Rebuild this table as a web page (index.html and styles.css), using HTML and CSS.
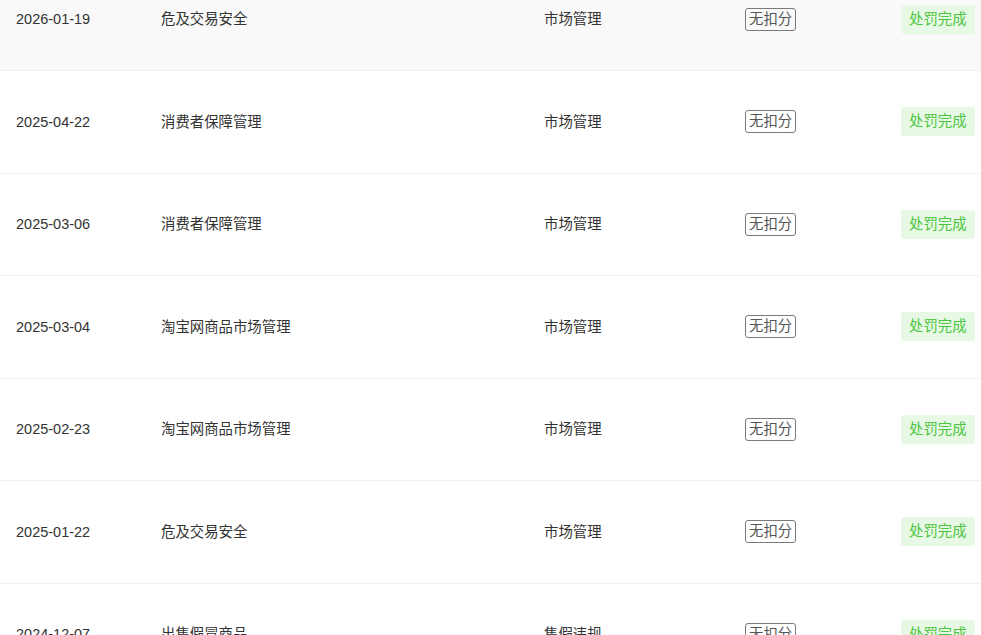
FILE: index.html
```html
<!DOCTYPE html>
<html lang="zh-CN">
<head>
<meta charset="utf-8">
<title>处罚记录</title>
<link rel="stylesheet" href="styles.css">
</head>
<body>
<div class="viewport">
  <div class="table">
    <div class="row row-hover">
      <div class="cell date">2026-01-19</div>
      <div class="cell">危及交易安全</div>
      <div class="cell">市场管理</div>
      <div class="cell"><span class="score">无扣分</span></div>
      <div class="cell"><span class="status">处罚完成</span></div>
    </div>
    <div class="row">
      <div class="cell date">2025-04-22</div>
      <div class="cell">消费者保障管理</div>
      <div class="cell">市场管理</div>
      <div class="cell"><span class="score">无扣分</span></div>
      <div class="cell"><span class="status">处罚完成</span></div>
    </div>
    <div class="row">
      <div class="cell date">2025-03-06</div>
      <div class="cell">消费者保障管理</div>
      <div class="cell">市场管理</div>
      <div class="cell"><span class="score">无扣分</span></div>
      <div class="cell"><span class="status">处罚完成</span></div>
    </div>
    <div class="row">
      <div class="cell date">2025-03-04</div>
      <div class="cell">淘宝网商品市场管理</div>
      <div class="cell">市场管理</div>
      <div class="cell"><span class="score">无扣分</span></div>
      <div class="cell"><span class="status">处罚完成</span></div>
    </div>
    <div class="row">
      <div class="cell date">2025-02-23</div>
      <div class="cell">淘宝网商品市场管理</div>
      <div class="cell">市场管理</div>
      <div class="cell"><span class="score">无扣分</span></div>
      <div class="cell"><span class="status">处罚完成</span></div>
    </div>
    <div class="row">
      <div class="cell date">2025-01-22</div>
      <div class="cell">危及交易安全</div>
      <div class="cell">市场管理</div>
      <div class="cell"><span class="score">无扣分</span></div>
      <div class="cell"><span class="status">处罚完成</span></div>
    </div>
    <div class="row">
      <div class="cell date">2024-12-07</div>
      <div class="cell">出售假冒商品</div>
      <div class="cell">售假违规</div>
      <div class="cell"><span class="score">无扣分</span></div>
      <div class="cell"><span class="status">处罚完成</span></div>
    </div>
  </div>
</div>
</body>
</html>
```
FILE: styles.css
```css
html, body {
  margin: 0;
  padding: 0;
  background: #ffffff;
}
body {
  font-family: "Liberation Sans", "Noto Sans CJK SC", sans-serif;
  font-size: 14px;
  color: #333333;
  overflow: hidden;
  height: 635px;
}
.viewport {
  height: 635px;
  overflow: hidden;
}
.table {
  margin-top: -31.5px;
}
.row {
  display: grid;
  grid-template-columns: 145px 383px 201px 156px 1fr;
  align-items: center;
  height: 102.5px;
  box-sizing: border-box;
  padding-left: 16px;
  padding-right: 5px;
  border-bottom: 1px solid #f0f0f0;
}
.row-hover {
  background: #f9f9f9;
}
.cell {
  white-space: nowrap;
  line-height: 20px;
  font-size: 14.4px;
}
.date {
  font-size: 14.5px;
}
.score {
  display: inline-block;
  box-sizing: border-box;
  height: 23px;
  line-height: 21px;
  padding: 0 3px;
  border: 1px solid #7a7a7a;
  border-radius: 3px;
  color: #555555;
  font-size: 14.4px;
}
.status {
  display: inline-block;
  box-sizing: border-box;
  height: 29px;
  line-height: 29px;
  padding: 0 8px;
  background: #e7f8e5;
  color: #4cc640;
  border-radius: 3px;
  font-size: 14.4px;
}
```
